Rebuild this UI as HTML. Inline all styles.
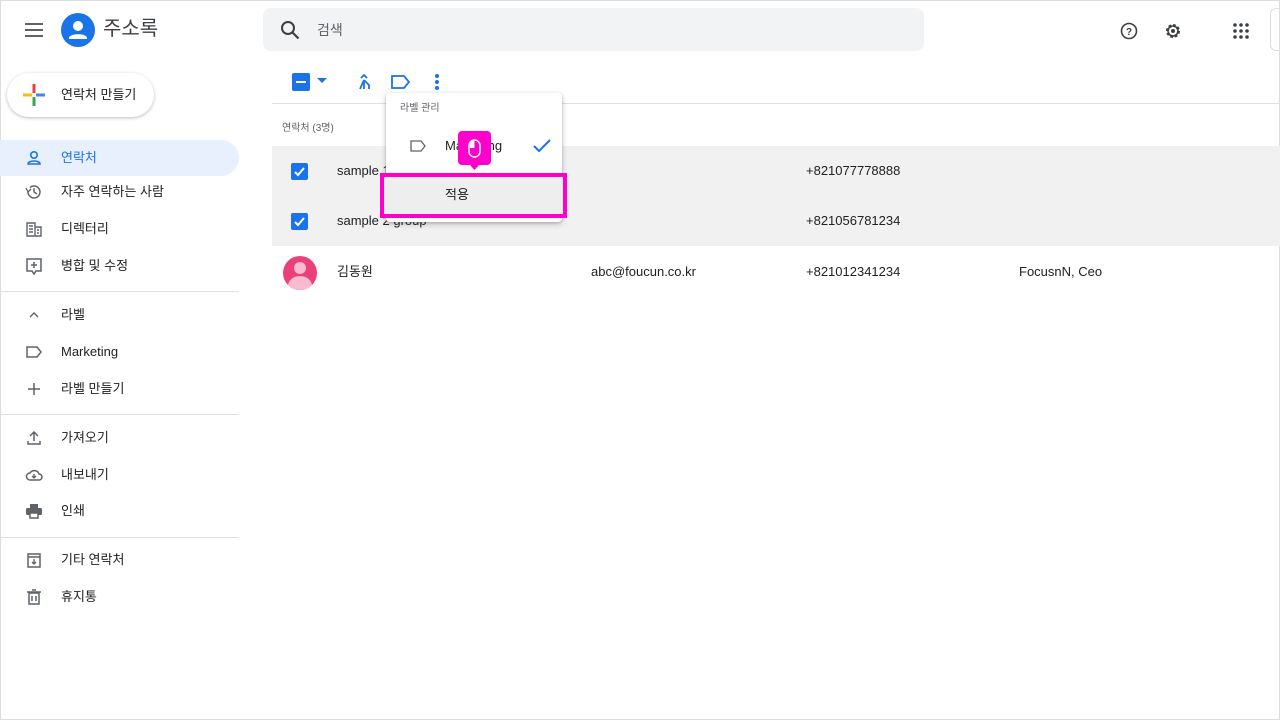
<!DOCTYPE html>
<html><head><meta charset="utf-8"><style>
*{box-sizing:border-box;margin:0;padding:0}
body{width:1280px;height:720px;position:relative;overflow:hidden;background:#fff;font-family:"Liberation Sans","Noto Sans CJK KR",sans-serif;color:#3c4043;line-height:1.15}
.a{position:absolute}
.t{font-size:13px;color:#202124}
.nav{position:absolute;left:0;width:239px;height:36px;display:flex;align-items:center}
.nav svg{position:absolute;left:25px}
.nav span{position:absolute;left:61px;font-size:13px;color:#202124}
.div{position:absolute;left:0;width:239px;height:1px;background:#e0e0e0}
.cb{position:absolute;width:17px;height:17px;border-radius:2px;background:#1a73e8}
</style></head><body>
<div class="a" style="left:0;top:0;width:1280px;height:720px;border:1px solid #ddd"></div>
<!-- header -->
<svg class="a" style="left:24px;top:21px" width="20" height="18"><path d="M1 3h18M1 9h18M1 15h18" stroke="#5f6368" stroke-width="2"/></svg>
<div class="a" style="left:61px;top:13px;width:34px;height:34px;border-radius:50%;background:#1a73e8"></div>
<svg class="a" style="left:61px;top:13px" width="34" height="34"><circle cx="17" cy="13" r="5" fill="#fff"/><path d="M8 25c0-5 18-5 18 0v1H8z" fill="#fff"/></svg>
<div class="a" style="left:103px;top:18px;font-size:20px;color:#3c4043">주소록</div>
<div class="a" style="left:263px;top:8px;width:661px;height:43px;border-radius:8px;background:#f1f3f4"></div>
<svg class="a" style="left:280px;top:20px" width="20" height="20"><circle cx="8" cy="8" r="6" fill="none" stroke="#3c4043" stroke-width="2"/><path d="M12.5 12.5l6 6" stroke="#3c4043" stroke-width="2.2"/></svg>
<div class="a" style="left:317px;top:22px;font-size:14px;color:#5f6368">검색</div>
<svg class="a" style="left:1119px;top:21px" width="20" height="20"><circle cx="10" cy="10" r="7.5" fill="none" stroke="#3c4043" stroke-width="1.6"/><text x="10" y="14" font-size="10" text-anchor="middle" fill="#3c4043" font-family="Liberation Sans" font-weight="bold">?</text></svg>
<svg class="a" style="left:1163px;top:21px" width="20" height="20"><circle cx="10" cy="10" r="5.5" fill="none" stroke="#3c4043" stroke-width="3" stroke-dasharray="2.5 1.8"/><circle cx="10" cy="10" r="5" fill="none" stroke="#3c4043" stroke-width="1.5"/><circle cx="10" cy="10" r="2" fill="#3c4043"/></svg>
<svg class="a" style="left:1232px;top:22px" width="18" height="18"><g fill="#3c4043"><circle cx="3" cy="3" r="1.8"/><circle cx="9" cy="3" r="1.8"/><circle cx="15" cy="3" r="1.8"/><circle cx="3" cy="9" r="1.8"/><circle cx="9" cy="9" r="1.8"/><circle cx="15" cy="9" r="1.8"/><circle cx="3" cy="15" r="1.8"/><circle cx="9" cy="15" r="1.8"/><circle cx="15" cy="15" r="1.8"/></g></svg>
<div class="a" style="left:1270px;top:8px;width:20px;height:43px;border:1px solid #ddd;border-radius:6px"></div>
<!-- create -->
<div class="a" style="left:7px;top:73px;width:147px;height:44px;border-radius:22px;background:#fff;box-shadow:0 1px 3px rgba(60,64,67,.35)"></div>
<svg class="a" style="left:23px;top:84px" width="22" height="22"><path d="M11 0v9" stroke="#ea4335" stroke-width="3"/><path d="M13 11h9" stroke="#4285f4" stroke-width="3"/><path d="M11 13v9" stroke="#34a853" stroke-width="3"/><path d="M0 11h9" stroke="#fbbc04" stroke-width="3"/></svg>
<div class="a t" style="left:61px;top:88px">연락처 만들기</div>
<!-- nav -->
<div class="nav" style="top:140px;background:#e8f0fe;border-radius:0 18px 18px 0"><svg width="18" height="18"><circle cx="9" cy="6" r="3.2" fill="none" stroke="#1a73e8" stroke-width="1.6"/><path d="M3 15c0-4 12-4 12 0z" fill="none" stroke="#1a73e8" stroke-width="1.6"/></svg><span style="color:#1a73e8">연락처</span></div>
<div class="nav" style="top:174px"><svg width="18" height="18"><path d="M3 9a6 6 0 1 0 2-4.5" fill="none" stroke="#5f6368" stroke-width="1.5"/><path d="M1 5l2 4 3-3" fill="none" stroke="#5f6368" stroke-width="1.3"/><path d="M9 5v4l3 2" fill="none" stroke="#5f6368" stroke-width="1.4"/></svg><span>자주 연락하는 사람</span></div>
<div class="nav" style="top:211px"><svg width="18" height="18"><path d="M2 3h8v13H2zM10 7h6v9h-6" fill="none" stroke="#5f6368" stroke-width="1.4"/><path d="M4 6h4M4 9h4M4 12h4M12 10h2M12 13h2" stroke="#5f6368" stroke-width="1.4"/></svg><span>디렉터리</span></div>
<div class="nav" style="top:248px"><svg width="18" height="18"><path d="M2 2h14v12h-5l-2 3-2-3H2z" fill="none" stroke="#5f6368" stroke-width="1.5"/><path d="M9 5v6M6 8h6" stroke="#5f6368" stroke-width="1.5"/></svg><span>병합 및 수정</span></div>
<div class="div" style="top:291px"></div>
<div class="nav" style="top:297px"><svg width="18" height="18"><path d="M5 11l4-4 4 4" fill="none" stroke="#5f6368" stroke-width="1.4"/></svg><span>라벨</span></div>
<div class="nav" style="top:334px"><svg width="18" height="18"><path d="M2 4h10l4 5-4 5H2z" fill="none" stroke="#5f6368" stroke-width="1.5"/></svg><span>Marketing</span></div>
<div class="nav" style="top:371px"><svg width="18" height="18"><path d="M9 3v12M3 9h12" stroke="#5f6368" stroke-width="1.5"/></svg><span>라벨 만들기</span></div>
<div class="div" style="top:414px"></div>
<div class="nav" style="top:420px"><svg width="18" height="18"><path d="M3 12v3h12v-3M9 12V4M5 7l4-4 4 4" fill="none" stroke="#5f6368" stroke-width="1.5"/></svg><span>가져오기</span></div>
<div class="nav" style="top:457px"><svg width="18" height="18"><path d="M5 14a3.5 3.5 0 0 1 0-7 5 5 0 0 1 9 1 3 3 0 0 1 0 6z" fill="none" stroke="#5f6368" stroke-width="1.5"/><path d="M9 8v4M7 10l2 2 2-2" fill="none" stroke="#5f6368" stroke-width="1.3"/></svg><span>내보내기</span></div>
<div class="nav" style="top:493px"><svg width="18" height="18"><path d="M5 2h8v4H5z" fill="#5f6368"/><rect x="1" y="6" width="16" height="7" rx="1.5" fill="#5f6368"/><path d="M5 11h8v5H5z" fill="#fff" stroke="#5f6368" stroke-width="1.5"/></svg><span>인쇄</span></div>
<div class="div" style="top:537px"></div>
<div class="nav" style="top:542px"><svg width="18" height="18"><path d="M3 3h12v13H3zM3 6h12" fill="none" stroke="#5f6368" stroke-width="1.5"/><path d="M9 8v5M7 11l2 2 2-2" fill="none" stroke="#5f6368" stroke-width="1.3"/></svg><span>기타 연락처</span></div>
<div class="nav" style="top:579px"><svg width="18" height="18"><path d="M4 5h10v11H4zM2 4h14M7 2h4M7 8v5M11 8v5" fill="none" stroke="#5f6368" stroke-width="1.5"/></svg><span>휴지통</span></div>
<!-- toolbar -->
<div class="cb" style="left:292px;top:73px;width:18px;height:18px"></div>
<div class="a" style="left:296px;top:81px;width:10px;height:2px;background:#fff"></div>
<svg class="a" style="left:317px;top:78px" width="10" height="6"><path d="M0 0h10L5 5z" fill="#1a73e8"/></svg>
<svg class="a" style="left:355px;top:73px" width="18" height="18"><path d="M9 16V7M9 7L5 16M9 7l5 5v4M6 5l3-3 3 3" fill="none" stroke="#1a73e8" stroke-width="1.8"/></svg>
<svg class="a" style="left:391px;top:74px" width="20" height="16"><path d="M1 2h12l5 6-5 6H1z" fill="none" stroke="#1a73e8" stroke-width="1.8"/></svg>
<svg class="a" style="left:433px;top:73px" width="8" height="18"><g fill="#1a73e8"><circle cx="4" cy="3" r="2"/><circle cx="4" cy="9" r="2"/><circle cx="4" cy="15" r="2"/></g></svg>
<div class="a" style="left:272px;top:103px;width:1008px;height:1px;background:#e0e0e0"></div>
<div class="a" style="left:282px;top:123px;font-size:10px;color:#5f6368">연락처 (3명)</div>
<!-- rows -->
<div class="a" style="left:272px;top:146px;width:1008px;height:100px;background:#f1f1f1"></div>
<div class="cb" style="left:291px;top:163px"></div>
<svg class="a" style="left:291px;top:163px" width="17" height="17"><path d="M4 9l3 3 6-7" fill="none" stroke="#fff" stroke-width="2"/></svg>
<div class="a t" style="left:337px;top:164px">sample 1</div>
<div class="a t" style="left:806px;top:164px">+821077778888</div>
<div class="cb" style="left:291px;top:213px"></div>
<svg class="a" style="left:291px;top:213px" width="17" height="17"><path d="M4 9l3 3 6-7" fill="none" stroke="#fff" stroke-width="2"/></svg>
<div class="a t" style="left:337px;top:214px">sample 2 group</div>
<div class="a t" style="left:806px;top:214px">+821056781234</div>
<div class="a" style="left:283px;top:256px;width:34px;height:34px;border-radius:50%;background:#ec407a;overflow:hidden"><div style="position:absolute;left:11px;top:6px;width:12px;height:12px;border-radius:50%;background:#f8bbd0"></div><div style="position:absolute;left:5px;top:20px;width:24px;height:20px;border-radius:50%;background:#f8bbd0"></div></div>
<div class="a t" style="left:337px;top:265px">김동원</div>
<div class="a t" style="left:591px;top:265px">abc@foucun.co.kr</div>
<div class="a t" style="left:806px;top:265px">+821012341234</div>
<div class="a t" style="left:1019px;top:265px">FocusnN, Ceo</div>
<!-- popup -->
<div class="a" style="left:386px;top:93px;width:176px;height:129px;background:#fff;border-radius:4px;box-shadow:0 2px 6px rgba(60,64,67,.3),0 1px 2px rgba(60,64,67,.2)"></div>
<div class="a" style="left:400px;top:103px;font-size:10px;color:#5f6368">라벨 관리</div>
<svg class="a" style="left:410px;top:140px" width="16" height="12"><path d="M1 1h10l4 5-4 5H1z" fill="none" stroke="#5f6368" stroke-width="1.3"/></svg>
<div class="a t" style="left:445px;top:139px">Marketing</div>
<svg class="a" style="left:532px;top:138px" width="20" height="16"><path d="M2 8l5 5 11-11" fill="none" stroke="#1a73e8" stroke-width="2"/></svg>
<div class="a" style="left:380px;top:173px;width:187px;height:45px;border:4px solid #f0c;background:#eeeeee"></div>
<div class="a t" style="left:445px;top:188px">적용</div>
<div class="a" style="left:458px;top:131px;width:33px;height:34px;border-radius:4px;background:#f0c"></div>
<svg class="a" style="left:458px;top:131px" width="33" height="42"><path d="M12 34h9l-4.5 5z" fill="#f0c"/><rect x="11" y="9" width="11" height="17" rx="5.5" fill="none" stroke="#fff" stroke-width="1.5"/><path d="M12 10h4.5v7H12z" fill="#fff"/></svg>
</body></html>
